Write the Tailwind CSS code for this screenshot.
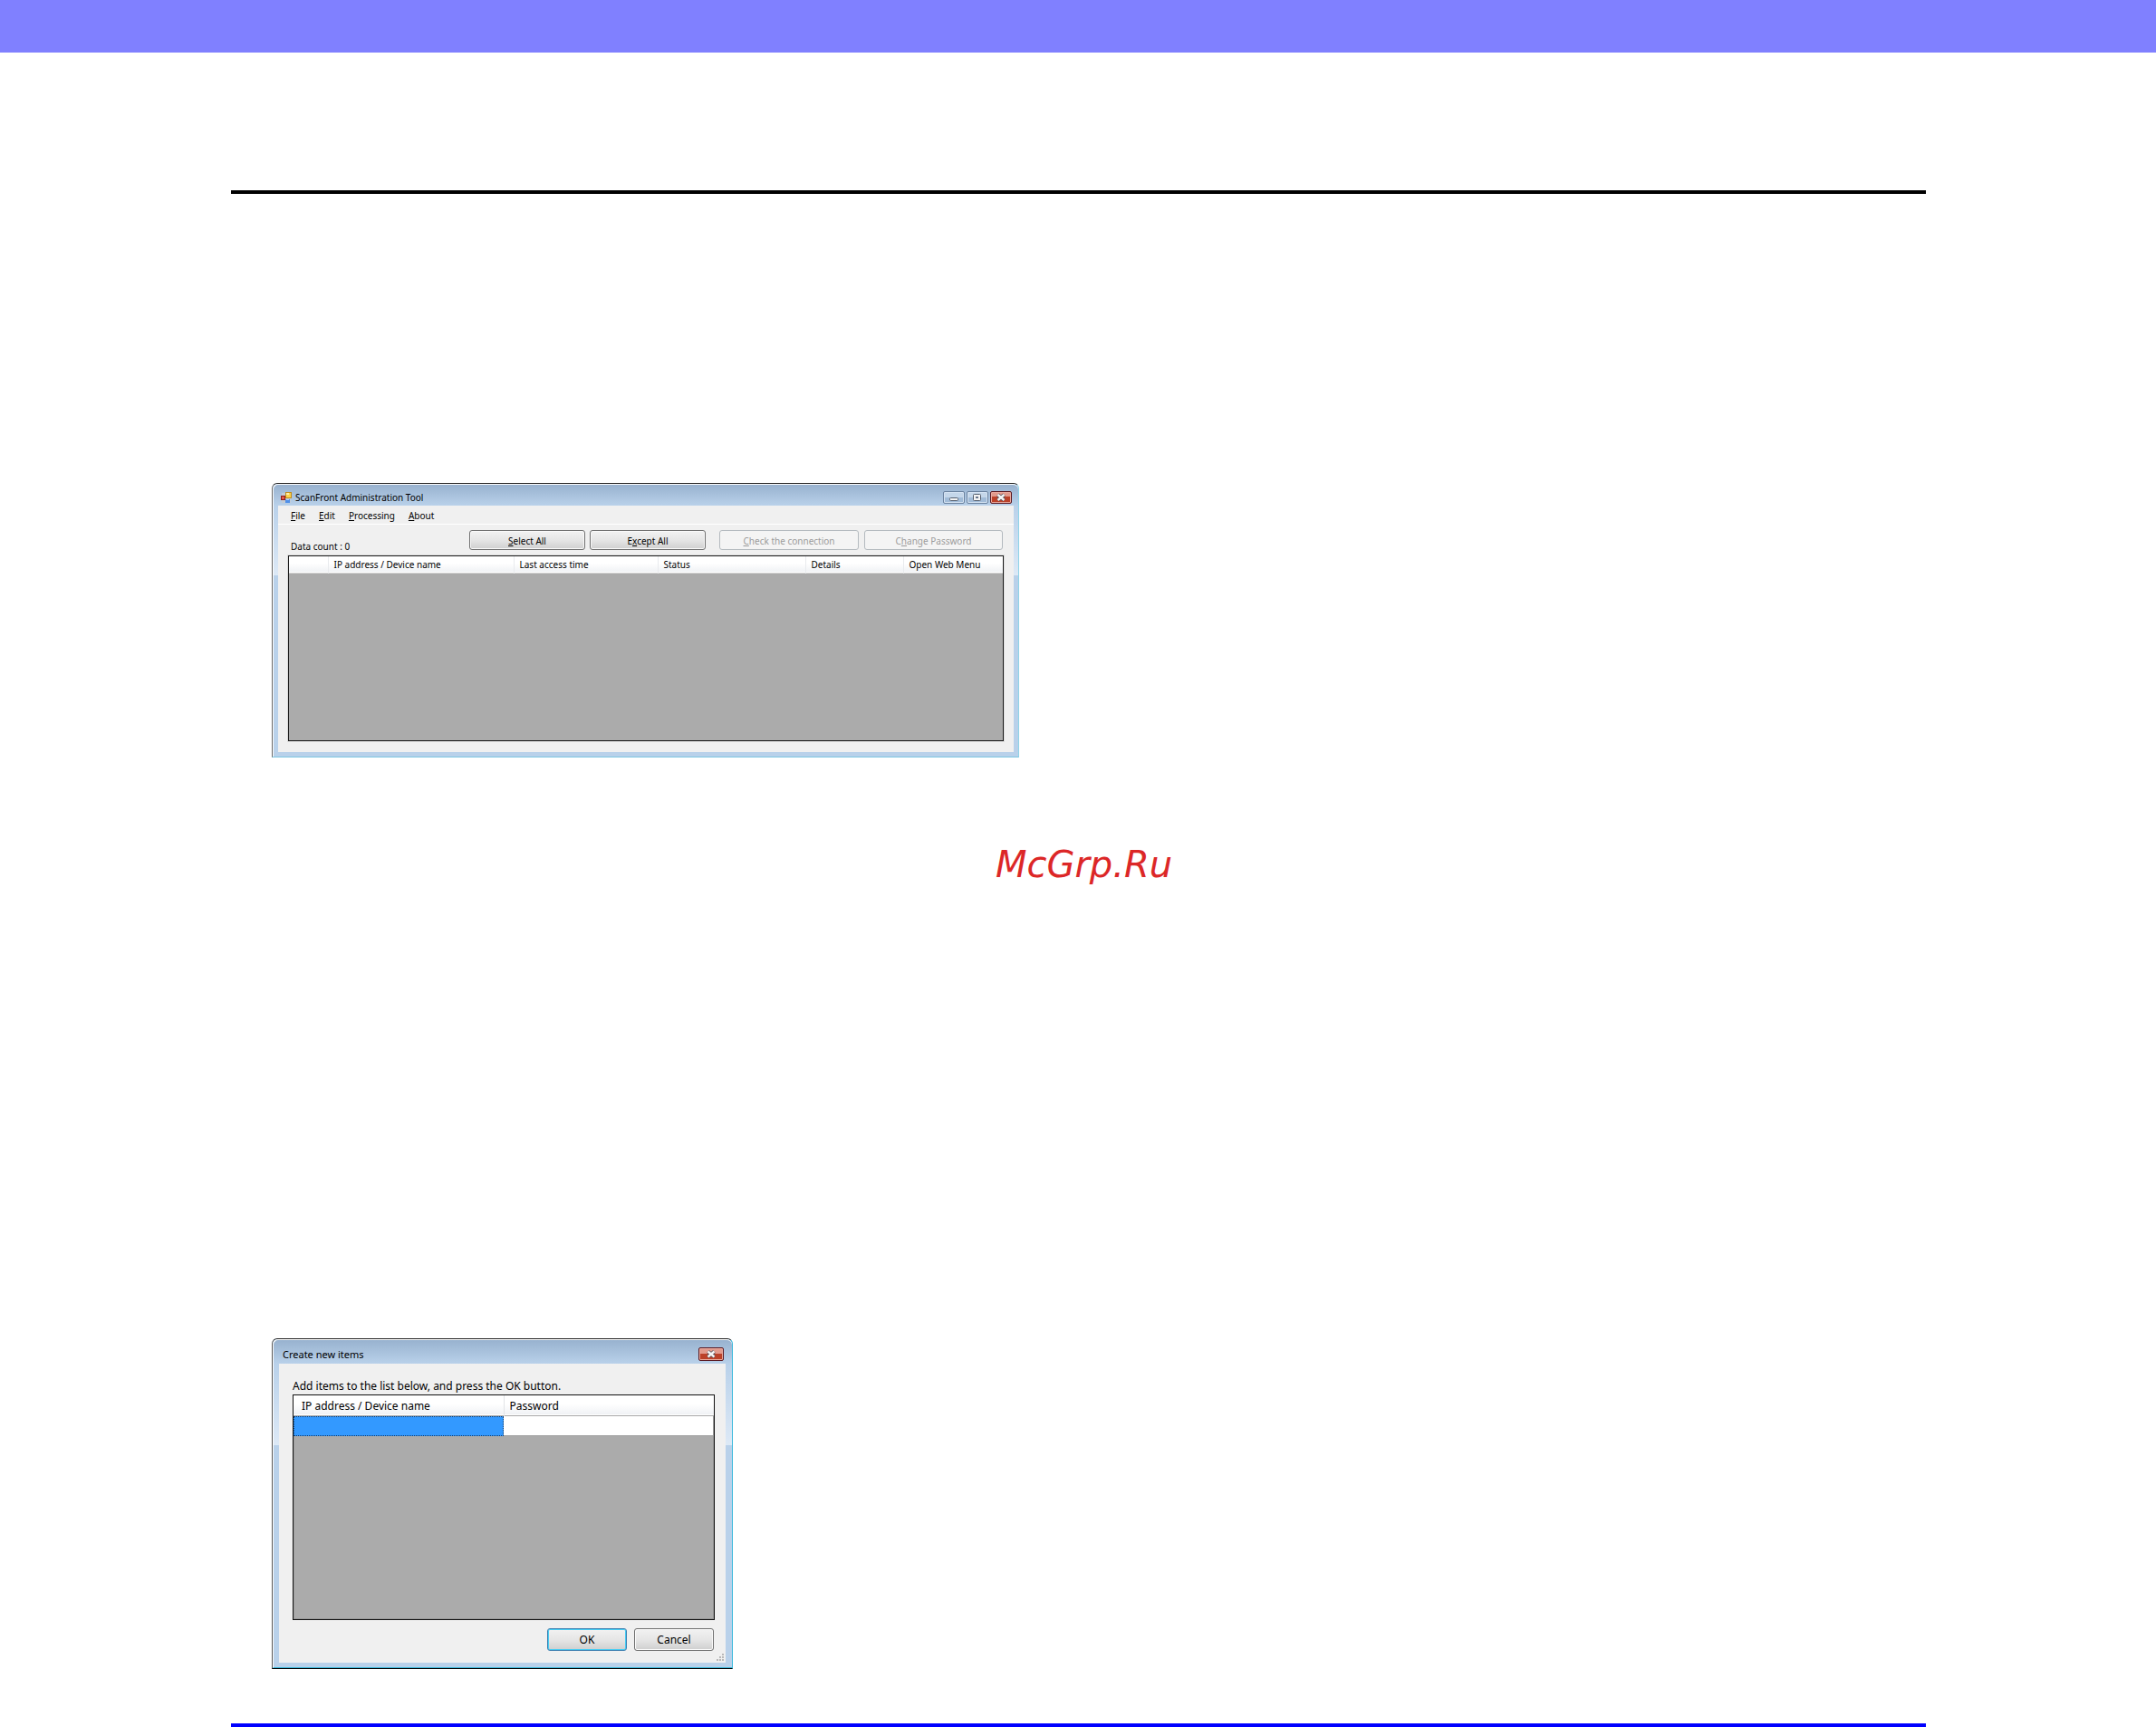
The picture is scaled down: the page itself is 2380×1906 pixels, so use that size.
<!DOCTYPE html>
<html lang="en">
<head>
  <meta charset="UTF-8">
  <meta name="viewport" content="width=device-width, initial-scale=1">
  <title>ScanFront Administration Tool</title>
  <script src="https://cdn.jsdelivr.net/npm/@tailwindcss/browser@4"></script>
</head>
<body class="bg-white text-black font-['Noto_Sans',sans-serif]">
  <header class="h-[58px] bg-[#8080ff]"></header>

  <main class="ml-[255px] mr-[254px] mt-[152px] border-y-4 border-t-black border-b-[#0000ff]">

    <!-- Main window -->
    <section class="ml-[45px] mt-[319px] w-[825px] rounded-t-md border-t border-l border-r border-b border-t-[#222] border-l-[#666] border-r-[#8fd3e8] border-b-[#7cc6e0] bg-[#b9d1ea] text-[10px] leading-3">
      <div class="rounded-t-md border-l border-t border-white bg-linear-to-b from-[#98b2cf] to-[#b9d1ea] h-6 pl-2 pr-[7px] pt-1 flex items-center">
        <svg class="w-3 h-3 mr-1" viewBox="0 0 12 12">
          <rect x="1" y="1" width="10" height="11" fill="#c3cbd4"/>
          <rect x="0.5" y="4.500" width="4" height="4" fill="#e05a4a" stroke="#8e1c16"/>
          <rect x="5.500" y="0.500" width="6" height="6" fill="#fbd34c" stroke="#c08a1c"/>
          <rect x="6" y="1" width="3" height="2" fill="#fff0a8"/>
          <rect x="5" y="8" width="5" height="4" fill="#4f8fe8"/>
          <rect x="6" y="8" width="3" height="1" fill="#a8ccff"/>
        </svg>
        <h1 class="flex-1 pt-px">ScanFront Administration Tool</h1>
        <div class="flex gap-[2px]">
          <button type="button" aria-label="Minimize" class="w-6 h-[14px] rounded-[2px] border border-[#6b83a0] bg-linear-to-b from-[#c5d7ea] from-50% to-[#a2bcd8] to-50% shadow-[inset_0_0_0_1px_#d5e3f2]">
            <svg class="w-[22px] h-3" viewBox="0 0 22 12"><rect x="6.500" y="6.500" width="9" height="3" rx="1" fill="#f4f4f4" stroke="#555f6e"/></svg>
          </button>
          <button type="button" aria-label="Maximize" class="w-6 h-[14px] rounded-[2px] border border-[#6b83a0] bg-linear-to-b from-[#c5d7ea] from-50% to-[#a2bcd8] to-50% shadow-[inset_0_0_0_1px_#d5e3f2]">
            <svg class="w-[22px] h-3" viewBox="0 0 22 12"><rect x="6.500" y="2.500" width="8" height="7" rx="1" fill="#f4f4f4" stroke="#555f6e"/><rect x="9" y="5" width="3" height="2" fill="#66748a"/></svg>
          </button>
          <button type="button" aria-label="Close" class="w-6 h-[14px] rounded-[2px] border border-[#5b1a22] bg-linear-to-b from-[#e29a8c] from-45% to-[#bb4129] to-45% shadow-[inset_0_0_0_1px_#e9a99d]">
            <svg class="w-[22px] h-3" viewBox="0 0 22 12"><path d="M7.500 3l7 6M14.500 3l-7 6" stroke="#50515c" stroke-width="4"/><path d="M7.500 3l7 6M14.500 3l-7 6" stroke="#f6f6f6" stroke-width="2.400"/></svg>
          </button>
        </div>
      </div>
      <div class="border-l border-white px-[5px] pb-[5px] bg-[linear-gradient(#b9d1ea,#dde9f6_77px,#b9d1ea_77px)]">
        <div class="bg-[#f0f0f0] px-[11px] pb-3">
          <nav class="-mx-[11px] h-[21px] pl-[14px] pt-px flex gap-[15px] items-center border-b border-white">
            <button type="button"><u>F</u>ile</button>
            <button type="button"><u>E</u>dit</button>
            <button type="button"><u>P</u>rocessing</button>
            <button type="button"><u>A</u>bout</button>
          </nav>
          <div class="pt-[6px] pr-px h-[34px] flex items-start">
            <p class="pl-[3px] pt-3 w-[200px]">Data count : 0</p>
            <button type="button" class="w-32 h-[22px] rounded-[3px] border border-[#707070] bg-linear-to-b from-[#f2f2f2] via-[#e6e6e6] via-50% to-[#cfcfcf] shadow-[inset_0_0_0_1px_#fafafa] pt-px"><u>S</u>elect All</button>
            <button type="button" class="ml-[5px] w-32 h-[22px] rounded-[3px] border border-[#707070] bg-linear-to-b from-[#f2f2f2] via-[#e6e6e6] via-50% to-[#cfcfcf] shadow-[inset_0_0_0_1px_#fafafa] pt-px">E<u>x</u>cept All</button>
            <button type="button" disabled class="ml-auto w-[154px] h-[22px] rounded-[3px] border border-[#b4babf] bg-[#f4f4f4] text-[#9b9b9b] pt-px"><u>C</u>heck the connection</button>
            <button type="button" disabled class="ml-[6px] w-[153px] h-[22px] rounded-[3px] border border-[#b4babf] bg-[#f4f4f4] text-[#9b9b9b] pt-px">C<u>h</u>ange Password</button>
          </div>
          <div class="h-[205px] border border-[#1a1a1a] bg-[#ababab] shadow-[0_0_0_1px_#dcdcdc]">
            <table class="w-full table-fixed border-collapse">
              <colgroup>
                <col class="w-[43px]"><col class="w-[205px]"><col class="w-[159px]"><col class="w-[163px]"><col class="w-[108px]"><col>
              </colgroup>
              <thead>
                <tr class="h-[18px] border-b border-[#d5d5d5] bg-linear-to-b from-white from-45% to-[#f0f2f5] text-left">
                  <td class="border-r border-[#e9ebee]"></td>
                  <th class="px-[6px] pt-px font-normal border-r border-[#e9ebee]">IP address / Device name</th>
                  <th class="px-[6px] pt-px font-normal border-r border-[#e9ebee]">Last access time</th>
                  <th class="px-[6px] pt-px font-normal border-r border-[#e9ebee]">Status</th>
                  <th class="px-[6px] pt-px font-normal border-r border-[#e9ebee]">Details</th>
                  <th class="px-[6px] pt-px font-normal">Open Web Menu</th>
                </tr>
              </thead>
            </table>
          </div>
        </div>
      </div>
    </section>

    <p class="mt-[94px] pl-3 text-center text-[40px] leading-[48px] italic text-[#dc2727] font-['DejaVu_Sans',sans-serif]">McGrp.Ru</p>

    <!-- New items dialog -->
    <form class="ml-[45px] mt-[499px] mb-[60px] w-[509px] rounded-t-md border border-t-[#222] border-l-[#555] border-r-[#3bb9dc] border-b-black bg-[#b9d1ea] text-[12px] leading-4">
      <div class="rounded-t-md border-l border-t border-white bg-linear-to-b from-[#98b2cf] to-[#b9d1ea] h-[27px] pl-[10px] pr-[9px] pt-1 flex items-center">
        <h2 class="flex-1 pt-px text-[11px]">Create new items</h2>
        <button type="button" aria-label="Close" class="w-7 h-[15px] rounded-[2px] border border-[#5b1a22] bg-linear-to-b from-[#e29a8c] from-45% to-[#bb4129] to-45% shadow-[inset_0_0_0_1px_#e9a99d]">
          <svg class="w-[26px] h-[13px]" viewBox="0 0 26 13"><path d="M9.500 3.500l7 6M16.500 3.500l-7 6" stroke="#50515c" stroke-width="4"/><path d="M9.500 3.500l7 6M16.500 3.500l-7 6" stroke="#f6f6f6" stroke-width="2.400"/></svg>
        </button>
      </div>
      <div class="border-l border-b border-l-white border-b-[#3bb9dc] pl-[6px] pr-[7px] pb-[5px] bg-[linear-gradient(#b9d1ea,#dde9f6_90px,#b9d1ea_90px)]">
        <div class="relative bg-[#f0f0f0] pl-[15px] pr-3 pt-[17px] pb-[13px]">
          <p class="h-[17px]">Add items to the list below, and press the OK button.</p>
          <div class="h-[249px] border border-[#111] bg-[#ababab] shadow-[inset_0_0_0_1px_#999]">
            <table class="w-full table-fixed border-collapse">
              <colgroup><col class="w-[232px]"><col></colgroup>
              <thead>
                <tr class="h-[22px] border-b border-[#a8a8a8] bg-linear-to-b from-white from-45% to-[#f0f2f5] text-left">
                  <th class="pl-[9px] pt-[2px] font-normal border-r border-[#e2e4e7]">IP address / Device name</th>
                  <th class="pl-[6px] pt-[2px] font-normal">Password</th>
                </tr>
              </thead>
              <tbody>
                <tr class="h-[22px]">
                  <td class="p-0"><input type="text" aria-label="IP address / Device name" class="block w-full h-[22px] bg-[#3399ff] border border-dotted border-[#123a66]"></td>
                  <td class="p-0"><input type="password" aria-label="Password" class="block w-full h-[22px] bg-white border-b border-r border-[#a0a0a0]"></td>
                </tr>
              </tbody>
            </table>
          </div>
          <div class="mt-[9px] pr-px flex justify-end gap-2">
            <button type="submit" class="w-[88px] h-[25px] rounded-[3px] border border-[#3c7fb1] bg-linear-to-b from-[#f2f2f2] via-[#e6e6e6] via-50% to-[#cfcfcf] shadow-[inset_0_0_0_1px_#46ccf2]">OK</button>
            <button type="button" class="w-[88px] h-[25px] rounded-[3px] border border-[#707070] bg-linear-to-b from-[#f2f2f2] via-[#e6e6e6] via-50% to-[#cfcfcf] shadow-[inset_0_0_0_1px_#fafafa]">Cancel</button>
          </div>
          <!-- resize grip -->
          <svg class="absolute right-[2px] bottom-[2px] w-2 h-2" viewBox="0 0 8 8" fill="#b8b8b8">
            <path d="M6 0h2v2H6zM3 3h2v2H3zM6 3h2v2H6zM0 6h2v2H0zM3 6h2v2H3zM6 6h2v2H6z"/>
          </svg>
        </div>
      </div>
    </form>
  </main>

  <script>
    document.querySelector('form').addEventListener('submit', e => e.preventDefault());
  </script>
</body>
</html>
